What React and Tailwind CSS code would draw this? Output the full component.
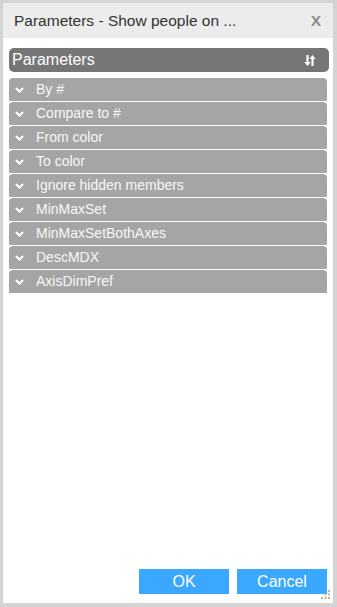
import React from "react";

const items = [
  "By #",
  "Compare to #",
  "From color",
  "To color",
  "Ignore hidden members",
  "MinMaxSet",
  "MinMaxSetBothAxes",
  "DescMDX",
  "AxisDimPref",
];

function Chevron() {
  return (
    <svg width="9" height="6" viewBox="0 0 9 6" className="shrink-0">
      <path d="M1 1 L4.5 4.5 L8 1" fill="none" stroke="#ffffff" strokeWidth="2" />
    </svg>
  );
}

function SortIcon() {
  return (
    <svg width="12" height="13" viewBox="0 0 12 13">
      <path d="M3.5 1 V10" stroke="#fff" strokeWidth="2.2" />
      <path d="M0.3 8 L3.5 12 L6.7 8 Z" fill="#fff" />
      <path d="M8.5 3 V12" stroke="#fff" strokeWidth="2.2" />
      <path d="M5.3 5 L8.5 1 L11.7 5 Z" fill="#fff" />
    </svg>
  );
}

export default function App() {
  return (
    <div className="w-[337px] h-[607px] bg-[#d4d4d4] pl-[3px] pt-[3px] pr-[4px] pb-[4px] font-['Liberation_Sans',Arial,sans-serif]">
      <div className="relative flex h-full flex-col bg-white">
        <div className="flex h-[35px] items-center justify-between bg-[#ececec] pl-[11px] pr-[12px]">
          <span className="text-[15.5px] text-[#333333]">Parameters - Show people on ...</span>
          <span className="text-[15px] font-bold text-[#8a8a8a] leading-none">X</span>
        </div>
        <div className="flex flex-1 flex-col px-[6px] pt-[10px]">
          <div className="flex h-[24px] w-[320px] items-center justify-between rounded-[5px] bg-[#767676] pl-[3px] pr-[13px]">
            <span className="text-[16px] text-white">Parameters</span>
            <SortIcon />
          </div>
          <div className="mt-[6px] flex w-[318px] flex-col gap-[1px]">
            {items.map((t) => (
              <div
                key={t}
                className="flex h-[23px] items-center rounded-t-[4px] bg-[#a5a5a5] pl-[6px]"
              >
                <Chevron />
                <span className="ml-[12px] text-[14px] text-[#f7f7f7]">{t}</span>
              </div>
            ))}
          </div>
          <div className="flex-1" />
          <div className="mb-[9px] flex w-[318px] justify-end gap-[8px]">
            <button className="h-[25px] w-[90px] bg-[#3aa8ff] text-[16px] text-white">OK</button>
            <button className="h-[25px] w-[90px] bg-[#3aa8ff] text-[16px] text-white">Cancel</button>
          </div>
        </div>
        <svg className="absolute right-[2px] bottom-[3px]" width="10" height="10" viewBox="0 0 10 10">
          <rect x="7" y="0" width="2" height="2" fill="#b5b5a5" />
          <rect x="3.5" y="3.5" width="2" height="2" fill="#b5b5a5" />
          <rect x="7" y="3.5" width="2" height="2" fill="#b5b5a5" />
          <rect x="0" y="7" width="2" height="2" fill="#b5b5a5" />
          <rect x="3.5" y="7" width="2" height="2" fill="#b5b5a5" />
          <rect x="7" y="7" width="2" height="2" fill="#b5b5a5" />
        </svg>
      </div>
    </div>
  );
}
